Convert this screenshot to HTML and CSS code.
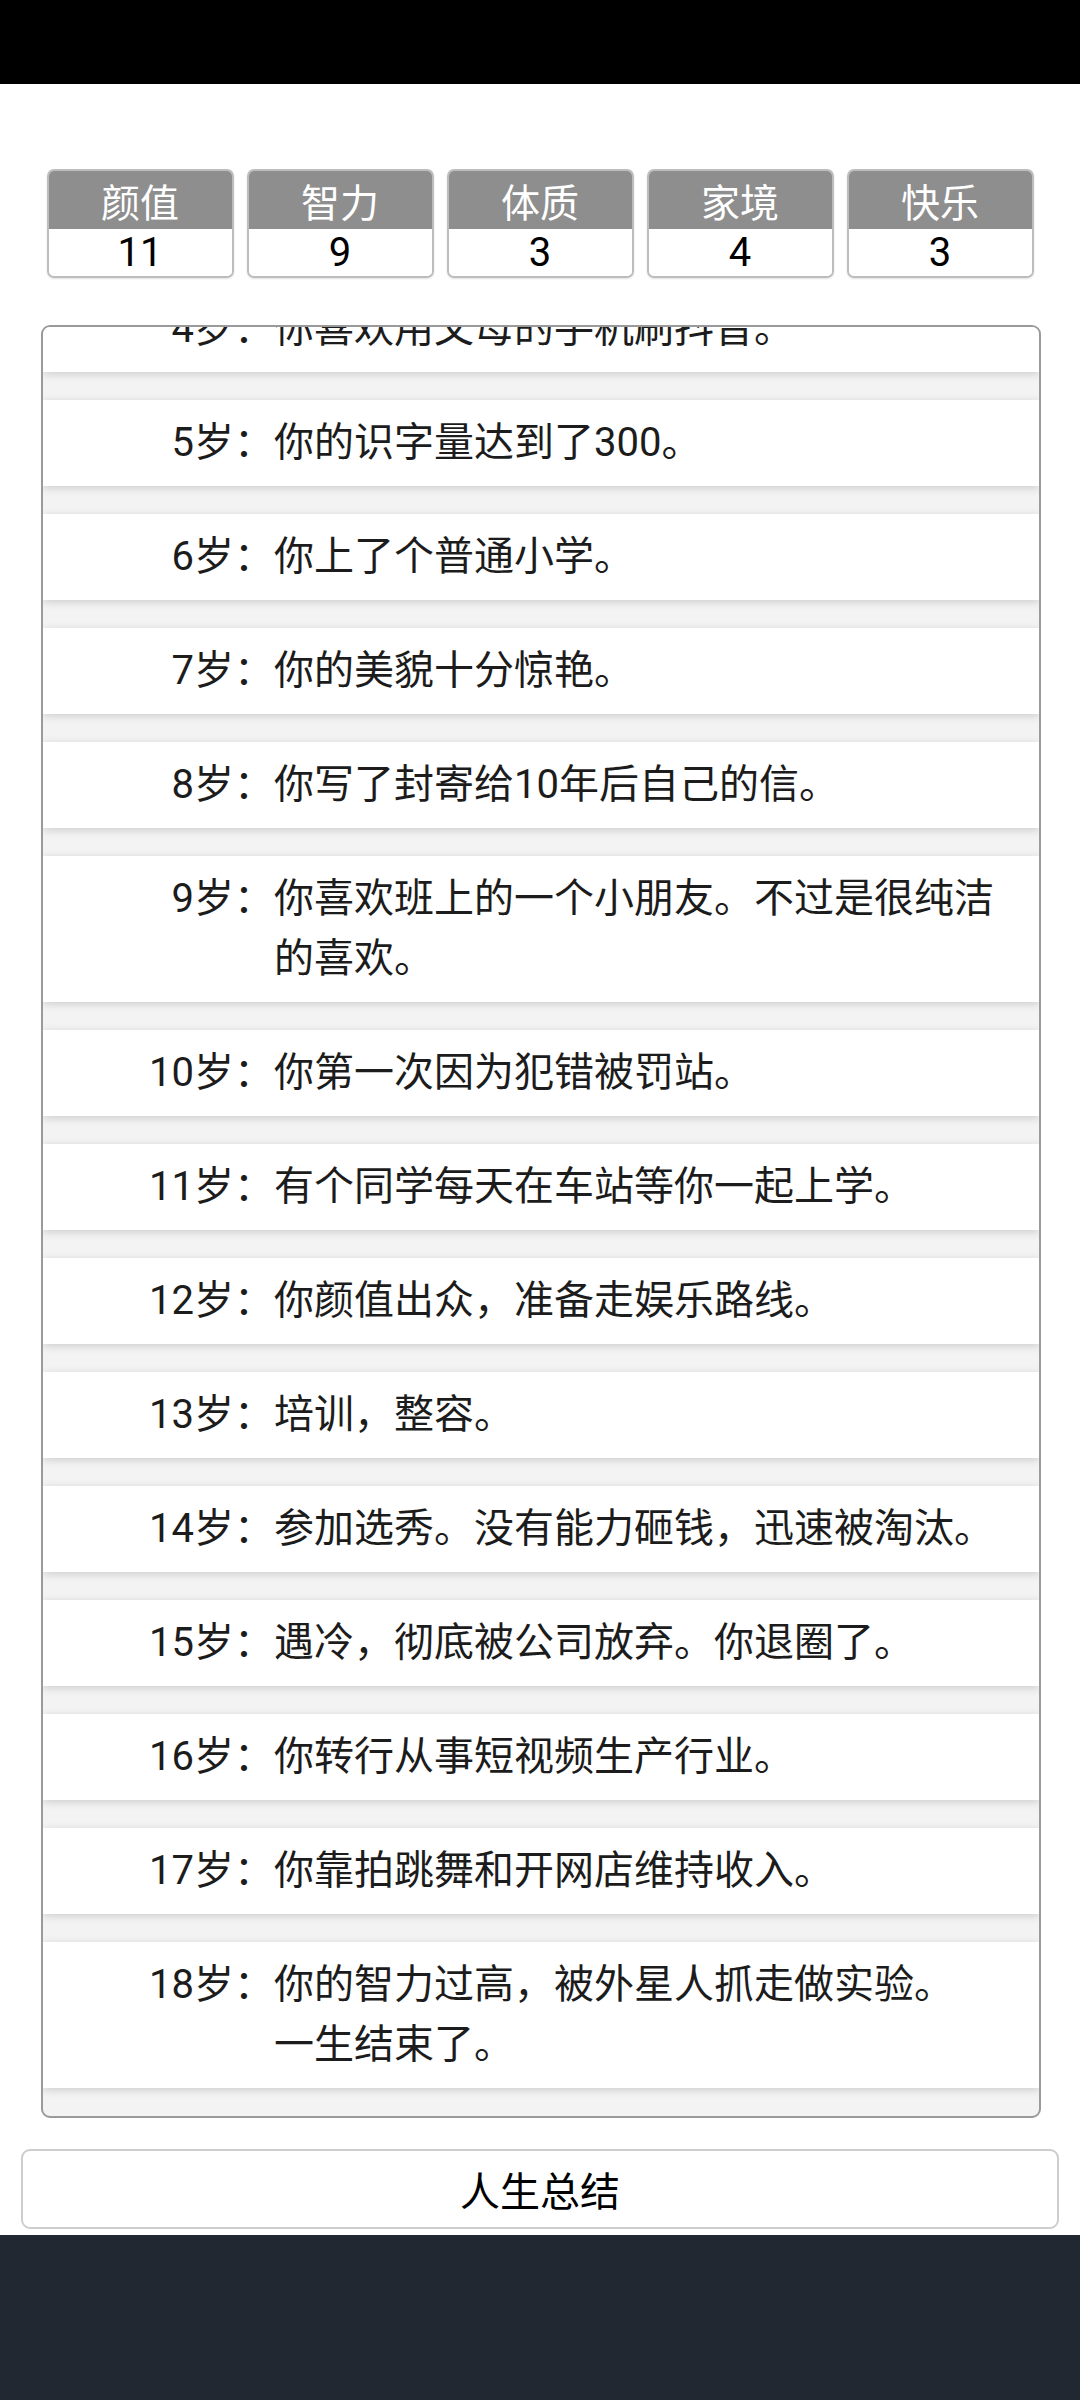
FILE: index.html
```html
<!DOCTYPE html>
<html lang="zh-CN">
<head>
<meta charset="utf-8">
<link rel="stylesheet" href="styles.css">
</head>
<body>
<div class="page">
  <div class="statusbar"></div>
  <div class="stats">
    <div class="stat"><div class="stat-name">颜值</div><div class="stat-value">11</div></div>
    <div class="stat"><div class="stat-name">智力</div><div class="stat-value">9</div></div>
    <div class="stat"><div class="stat-name">体质</div><div class="stat-value">3</div></div>
    <div class="stat"><div class="stat-name">家境</div><div class="stat-value">4</div></div>
    <div class="stat"><div class="stat-name">快乐</div><div class="stat-value">3</div></div>
  </div>
  <div class="log">
    <div class="log-list">
      <div class="row"><span class="age">4岁：</span><span class="text">你喜欢用父母的手机刷抖音。</span></div>
      <div class="row"><span class="age">5岁：</span><span class="text">你的识字量达到了300。</span></div>
      <div class="row"><span class="age">6岁：</span><span class="text">你上了个普通小学。</span></div>
      <div class="row"><span class="age">7岁：</span><span class="text">你的美貌十分惊艳。</span></div>
      <div class="row"><span class="age">8岁：</span><span class="text">你写了封寄给10年后自己的信。</span></div>
      <div class="row"><span class="age">9岁：</span><span class="text">你喜欢班上的一个小朋友。不过是很纯洁的喜欢。</span></div>
      <div class="row"><span class="age">10岁：</span><span class="text">你第一次因为犯错被罚站。</span></div>
      <div class="row"><span class="age">11岁：</span><span class="text">有个同学每天在车站等你一起上学。</span></div>
      <div class="row"><span class="age">12岁：</span><span class="text">你颜值出众，准备走娱乐路线。</span></div>
      <div class="row"><span class="age">13岁：</span><span class="text">培训，整容。</span></div>
      <div class="row"><span class="age">14岁：</span><span class="text">参加选秀。没有能力砸钱，迅速被淘汰。</span></div>
      <div class="row"><span class="age">15岁：</span><span class="text">遇冷，彻底被公司放弃。你退圈了。</span></div>
      <div class="row"><span class="age">16岁：</span><span class="text">你转行从事短视频生产行业。</span></div>
      <div class="row"><span class="age">17岁：</span><span class="text">你靠拍跳舞和开网店维持收入。</span></div>
      <div class="row"><span class="age">18岁：</span><span class="text">你的智力过高，被外星人抓走做实验。<br>一生结束了。</span></div>
    </div>
  </div>
  <button class="summary">人生总结</button>
  <div class="footer"></div>
</div>
</body>
</html>
```

FILE: styles.css
```css
html, body {
  margin: 0;
  padding: 0;
  background: #ffffff;
}
body {
  font-family: Roboto, "Noto Sans CJK SC", "Noto Sans", sans-serif;
  color: #1c1c1c;
}
.page {
  width: 1080px;
  height: 2400px;
  display: flex;
  flex-direction: column;
  overflow: hidden;
}
.statusbar {
  height: 84px;
  background: #000000;
  flex: none;
}
.stats {
  margin-top: 85px;
  display: flex;
  justify-content: center;
  gap: 13px;
  flex: none;
}
.stat {
  width: 187px;
  height: 109px;
  box-sizing: border-box;
  border: 2px solid #bdbdbd;
  border-radius: 7px;
  overflow: hidden;
  display: flex;
  flex-direction: column;
  box-shadow: 0 1px 2px rgba(0,0,0,0.12);
}
.stat-name {
  height: 58px;
  background: #8e8e8e;
  color: #ffffff;
  font-family: "Noto Sans CJK SC", sans-serif;
  font-size: 39px;
  line-height: 58px;
  text-align: center;
}
.stat-value {
  height: 47px;
  background: #ffffff;
  color: #000000;
  font-size: 40px;
  line-height: 47px;
  text-align: center;
}
.log {
  margin: 47px 0 0 41px;
  width: 1000px;
  height: 1793px;
  box-sizing: border-box;
  border: 2px solid #9a9a9a;
  border-radius: 9px;
  overflow: hidden;
  background: #f3f3f3;
  display: flex;
  flex-direction: column;
  justify-content: flex-end;
  flex: none;
}
.log-list {
  display: flex;
  flex-direction: column;
  gap: 28px;
  padding-bottom: 28px;
}
.row {
  display: flex;
  background: #ffffff;
  padding: 13px 30px 13px 0;
  font-size: 40px;
  line-height: 60px;
  box-shadow: 0 2px 8px rgba(0,0,0,0.16);
}
.age {
  width: 231px;
  flex: none;
  text-align: right;
  white-space: nowrap;
}
.text {
  flex: 1;
}
.summary {
  margin: 31px 0 0 21px;
  width: 1038px;
  height: 80px;
  box-sizing: border-box;
  border: 2px solid #cdcdcd;
  border-radius: 9px;
  background: #ffffff;
  font-family: "Noto Sans CJK SC", sans-serif;
  font-size: 40px;
  color: #000000;
  padding: 0;
  flex: none;
}
.footer {
  margin-top: 6px;
  flex: 1;
  background: #222831;
}
```
